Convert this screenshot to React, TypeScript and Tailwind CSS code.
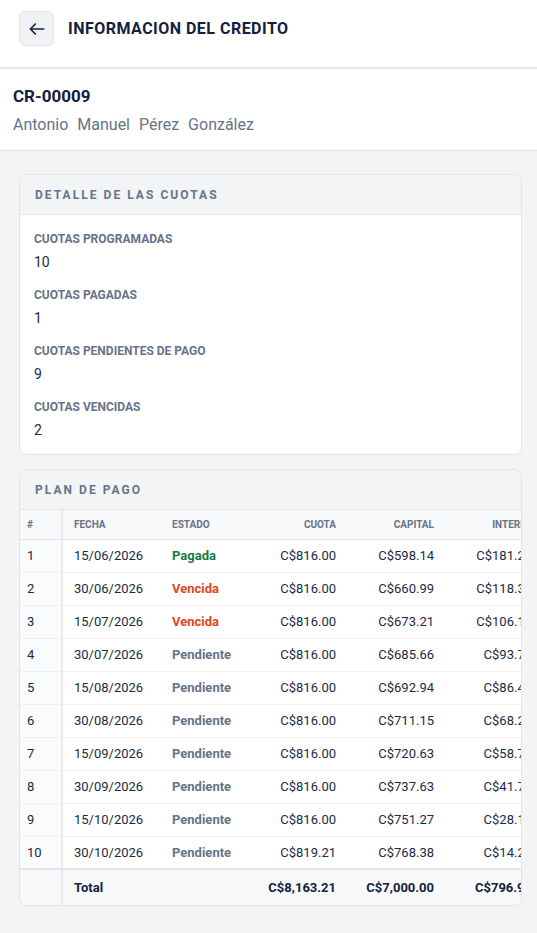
const cuotas = [
  { n: 1, fecha: '15/06/2026', estado: 'Pagada', cuota: 'C$816.00', capital: 'C$598.14', interes: 'C$181.23', saldo: 'C$6,401.86' },
  { n: 2, fecha: '30/06/2026', estado: 'Vencida', cuota: 'C$816.00', capital: 'C$660.99', interes: 'C$118.39', saldo: 'C$5,740.87' },
  { n: 3, fecha: '15/07/2026', estado: 'Vencida', cuota: 'C$816.00', capital: 'C$673.21', interes: 'C$106.17', saldo: 'C$5,067.66' },
  { n: 4, fecha: '30/07/2026', estado: 'Pendiente', cuota: 'C$816.00', capital: 'C$685.66', interes: 'C$93.72', saldo: 'C$4,382.00' },
  { n: 5, fecha: '15/08/2026', estado: 'Pendiente', cuota: 'C$816.00', capital: 'C$692.94', interes: 'C$86.44', saldo: 'C$3,689.06' },
  { n: 6, fecha: '30/08/2026', estado: 'Pendiente', cuota: 'C$816.00', capital: 'C$711.15', interes: 'C$68.23', saldo: 'C$2,977.91' },
  { n: 7, fecha: '15/09/2026', estado: 'Pendiente', cuota: 'C$816.00', capital: 'C$720.63', interes: 'C$58.75', saldo: 'C$2,257.28' },
  { n: 8, fecha: '30/09/2026', estado: 'Pendiente', cuota: 'C$816.00', capital: 'C$737.63', interes: 'C$41.75', saldo: 'C$1,519.65' },
  { n: 9, fecha: '15/10/2026', estado: 'Pendiente', cuota: 'C$816.00', capital: 'C$751.27', interes: 'C$28.11', saldo: 'C$768.38' },
  { n: 10, fecha: '30/10/2026', estado: 'Pendiente', cuota: 'C$819.21', capital: 'C$768.38', interes: 'C$14.20', saldo: 'C$0.00' },
];

const detalle = [
  { label: 'Cuotas programadas', value: '10' },
  { label: 'Cuotas pagadas', value: '1' },
  { label: 'Cuotas pendientes de pago', value: '9' },
  { label: 'Cuotas vencidas', value: '2' },
];

const estadoColor: Record<string, string> = {
  Pagada: 'text-[#187a47]',
  Vencida: 'text-[#e5441d]',
  Pendiente: 'text-[#667389]',
};

function CardHeader({ title }: { title: string }) {
  return (
    <div className="h-10 flex items-center px-[15px] bg-[#f3f4f6] border-b border-[#e2e5ea]">
      <span className="text-[12px] font-bold tracking-[0.17em] text-[#667389] uppercase">{title}</span>
    </div>
  );
}

export default function App() {
  return (
    <div className="min-h-[933px] bg-[#f3f4f6] font-['Roboto',sans-serif] text-[#1c2a44]">
      {/* Top bar */}
      <div className="h-[69px] bg-white border-b-2 border-[#e3e5e9] flex items-center pl-[19px] pb-[10px] gap-[14px]">
        <button className="w-[35px] h-[35px] rounded-md bg-[#f1f2f5] border border-[#e1e4e9] flex items-center justify-center">
          <svg className="w-5 h-5 text-[#13213c]" fill="none" stroke="currentColor" viewBox="0 0 24 24">
            <path strokeLinecap="round" strokeLinejoin="round" strokeWidth={2} d="M20 12H4m0 0l6-6m-6 6l6 6" />
          </svg>
        </button>
        <h1 className="text-[16px] font-bold tracking-[0.03em] text-[#13213c]">INFORMACION DEL CREDITO</h1>
      </div>

      {/* Credit summary */}
      <div className="bg-white border-b border-[#e1e4e9] px-[13px] pt-[15px] pb-[13px]">
        <div className="text-[17px] font-bold text-[#13213c] leading-6">CR-00009</div>
        <div className="mt-[5px] text-[16px] text-[#667389] leading-6 [word-spacing:5px]">Antonio Manuel Pérez González</div>
      </div>

      <div className="pl-[19px] pr-[15px] pt-[23px] pb-[26px] flex flex-col gap-[14px]">
        {/* Installments summary */}
        <div className="bg-white rounded-lg border border-[#e1e4e9] overflow-hidden">
          <CardHeader title="Detalle de las cuotas" />
          <div className="px-[14px] pt-[14px] pb-[14px] flex flex-col gap-[13px]">
            {detalle.map((d) => (
              <div key={d.label}>
                <div className="text-[12px] font-bold uppercase text-[#667389] leading-5">{d.label}</div>
                <div className="text-[14px] text-[#1c2a44] leading-5 mt-[3px]">{d.value}</div>
              </div>
            ))}
          </div>
        </div>

        {/* Payment plan */}
        <div className="bg-white rounded-lg border border-[#e1e4e9] overflow-hidden">
          <CardHeader title="Plan de pago" />
          <div className="overflow-x-auto">
            <table className="border-collapse text-[13px] whitespace-nowrap">
              <thead>
                <tr className="h-[29px] bg-[#f8f9fb] border-b border-[#e1e4e9] text-[10px] font-bold uppercase text-[#667389]">
                  <th className="w-[42px] min-w-[42px] pl-[7px] text-left font-bold border-r-2 border-[#e8eaee]">#</th>
                  <th className="w-[99px] min-w-[99px] pl-[11px] text-left font-bold">Fecha</th>
                  <th className="w-[90px] min-w-[90px] pl-[11px] text-left font-bold">Estado</th>
                  <th className="w-[97px] min-w-[97px] pr-[12px] text-right font-bold">Cuota</th>
                  <th className="w-[98px] min-w-[98px] pr-[12px] text-right font-bold">Capital</th>
                  <th className="w-[98px] min-w-[98px] pr-[12px] text-right font-bold">Interes</th>
                  <th className="w-[104px] min-w-[104px] pr-[12px] text-right font-bold">Saldo</th>
                </tr>
              </thead>
              <tbody>
                {cuotas.map((c) => (
                  <tr key={c.n} className="h-[33px] border-b border-[#eef0f3]">
                    <td className="pl-[7px] bg-[#fafbfc] border-r-2 border-[#e8eaee]">{c.n}</td>
                    <td className="pl-[11px]">{c.fecha}</td>
                    <td className={`pl-[11px] font-bold ${estadoColor[c.estado]}`}>{c.estado}</td>
                    <td className="pr-[12px] text-right">{c.cuota}</td>
                    <td className="pr-[12px] text-right">{c.capital}</td>
                    <td className="pr-[12px] text-right">{c.interes}</td>
                    <td className="pr-[12px] text-right">{c.saldo}</td>
                  </tr>
                ))}
                <tr className="h-[36px] bg-[#f8f9fb] border-t-2 border-[#e3e5e9] font-bold text-[#13213c]">
                  <td className="border-r-2 border-[#e8eaee]"></td>
                  <td className="pl-[11px]">Total</td>
                  <td></td>
                  <td className="pr-[12px] text-right">C$8,163.21</td>
                  <td className="pr-[12px] text-right">C$7,000.00</td>
                  <td className="pr-[12px] text-right">C$796.99</td>
                  <td className="pr-[12px] text-right"></td>
                </tr>
              </tbody>
            </table>
          </div>
        </div>
      </div>
    </div>
  );
}
